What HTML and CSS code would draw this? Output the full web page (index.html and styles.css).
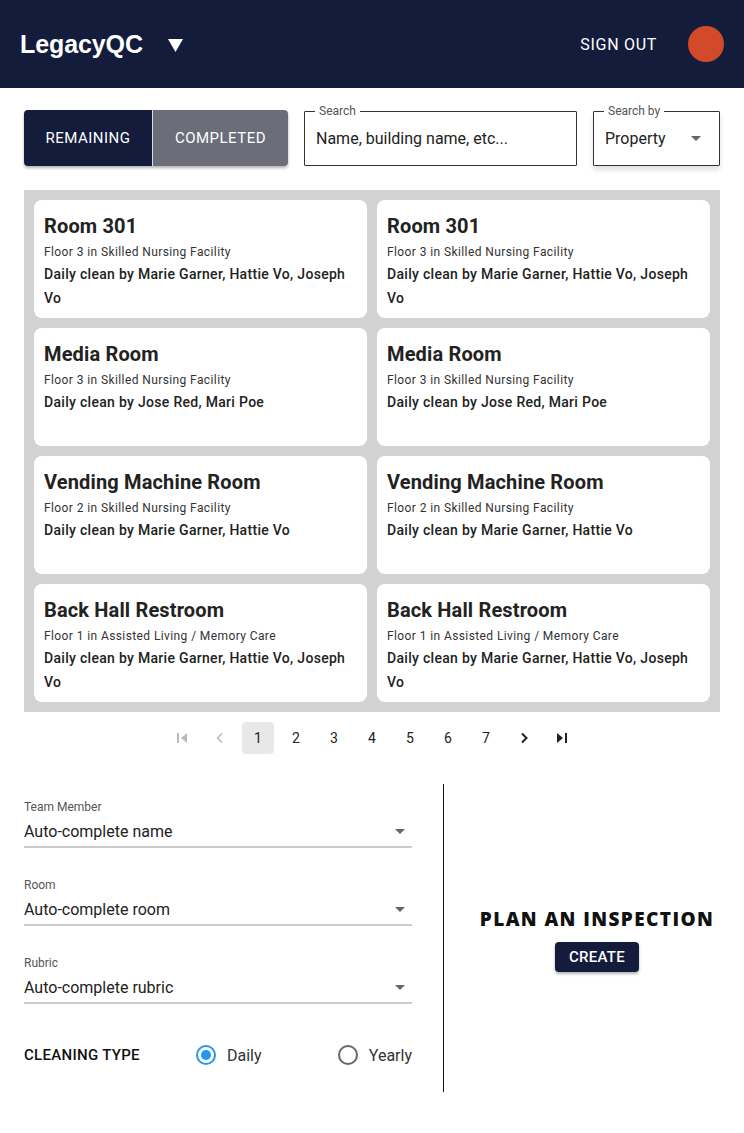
FILE: index.html
```html
<!DOCTYPE html>
<html>
<head>
<meta charset="utf-8">
<link rel="stylesheet" href="styles.css">
</head>
<body>
<header class="topbar">
  <div class="brand">
    <span class="brand-name">LegacyQC</span>
    <svg class="brand-caret" width="15" height="14" viewBox="0 0 15 14"><polygon points="0,1 15,1 7.5,14" fill="#fff"/></svg>
  </div>
  <div class="top-right">
    <span class="signout">SIGN OUT</span>
    <span class="avatar"></span>
  </div>
</header>

<main class="page">
  <div class="filters">
    <div class="toggle">
      <span class="toggle-btn active">REMAINING</span>
      <span class="toggle-btn">COMPLETED</span>
    </div>
    <fieldset class="outlined search">
      <legend>Search</legend>
      <span class="field-value">Name, building name, etc...</span>
    </fieldset>
    <fieldset class="outlined searchby">
      <legend>Search by</legend>
      <span class="field-value">Property</span>
      <svg class="caret" width="10" height="5" viewBox="0 0 10 5"><polygon points="0,0 10,0 5,5" fill="#666"/></svg>
    </fieldset>
  </div>

  <section class="grid">
    <div class="card"><h3>Room 301</h3><p class="sub">Floor 3 in Skilled Nursing Facility</p><p class="body">Daily clean by Marie Garner, Hattie Vo, Joseph Vo</p></div>
    <div class="card"><h3>Room 301</h3><p class="sub">Floor 3 in Skilled Nursing Facility</p><p class="body">Daily clean by Marie Garner, Hattie Vo, Joseph Vo</p></div>
    <div class="card"><h3>Media Room</h3><p class="sub">Floor 3 in Skilled Nursing Facility</p><p class="body">Daily clean by Jose Red, Mari Poe</p></div>
    <div class="card"><h3>Media Room</h3><p class="sub">Floor 3 in Skilled Nursing Facility</p><p class="body">Daily clean by Jose Red, Mari Poe</p></div>
    <div class="card"><h3>Vending Machine Room</h3><p class="sub">Floor 2 in Skilled Nursing Facility</p><p class="body">Daily clean by Marie Garner, Hattie Vo</p></div>
    <div class="card"><h3>Vending Machine Room</h3><p class="sub">Floor 2 in Skilled Nursing Facility</p><p class="body">Daily clean by Marie Garner, Hattie Vo</p></div>
    <div class="card"><h3>Back Hall Restroom</h3><p class="sub">Floor 1 in Assisted Living / Memory Care</p><p class="body">Daily clean by Marie Garner, Hattie Vo, Joseph Vo</p></div>
    <div class="card"><h3>Back Hall Restroom</h3><p class="sub">Floor 1 in Assisted Living / Memory Care</p><p class="body">Daily clean by Marie Garner, Hattie Vo, Joseph Vo</p></div>
  </section>

  <nav class="pager">
    <span class="pg icon disabled"><svg width="14" height="14" viewBox="0 0 14 14"><rect x="2" y="2" width="2" height="10" fill="currentColor"/><polygon points="12,2 12,12 6,7" fill="currentColor"/></svg></span>
    <span class="pg icon disabled"><svg width="14" height="14" viewBox="0 0 14 14"><polyline points="9,2.5 4.5,7 9,11.5" fill="none" stroke="currentColor" stroke-width="1.6"/></svg></span>
    <span class="pg current">1</span>
    <span class="pg">2</span>
    <span class="pg">3</span>
    <span class="pg">4</span>
    <span class="pg">5</span>
    <span class="pg">6</span>
    <span class="pg">7</span>
    <span class="pg icon"><svg width="14" height="14" viewBox="0 0 14 14"><polyline points="5,2.5 9.5,7 5,11.5" fill="none" stroke="currentColor" stroke-width="2"/></svg></span>
    <span class="pg icon"><svg width="14" height="14" viewBox="0 0 14 14"><polygon points="2,2 2,12 8,7" fill="currentColor"/><rect x="10" y="2" width="2" height="10" fill="currentColor"/></svg></span>
  </nav>

  <section class="plan">
    <div class="plan-form">
      <div class="select-field">
        <label>Team Member</label>
        <div class="select-row"><span>Auto-complete name</span><svg width="10" height="5" viewBox="0 0 10 5"><polygon points="0,0 10,0 5,5" fill="#666"/></svg></div>
      </div>
      <div class="select-field">
        <label>Room</label>
        <div class="select-row"><span>Auto-complete room</span><svg width="10" height="5" viewBox="0 0 10 5"><polygon points="0,0 10,0 5,5" fill="#666"/></svg></div>
      </div>
      <div class="select-field">
        <label>Rubric</label>
        <div class="select-row"><span>Auto-complete rubric</span><svg width="10" height="5" viewBox="0 0 10 5"><polygon points="0,0 10,0 5,5" fill="#666"/></svg></div>
      </div>
      <div class="cleaning">
        <span class="cleaning-label">CLEANING TYPE</span>
        <span class="radio"><span class="dot checked"></span>Daily</span>
        <span class="radio"><span class="dot"></span>Yearly</span>
      </div>
    </div>
    <div class="divider"></div>
    <div class="plan-cta">
      <h2>PLAN AN INSPECTION</h2>
      <span class="create">CREATE</span>
    </div>
  </section>
</main>
</body>
</html>
```

FILE: styles.css
```css
* { box-sizing: border-box; }
body {
  margin: 0;
  font-family: Roboto, "Noto Sans", sans-serif;
  color: #222;
  background: #fff;
}
.topbar {
  height: 88px;
  background: #141c3c;
  display: flex;
  align-items: center;
  justify-content: space-between;
  padding: 0 20px;
}
.brand { display: flex; align-items: center; gap: 25px; }
.brand-name {
  font-family: "Liberation Sans", Arial, sans-serif;
  font-weight: 700;
  font-size: 25px;
  color: #fff;
  letter-spacing: -0.1px;
}
.brand-caret { margin-top: 1px; }
.top-right { display: flex; align-items: center; gap: 31px; }
.signout {
  color: #fff;
  font-size: 16px;
  font-weight: 400;
  letter-spacing: 0.7px;
}
.avatar {
  width: 36px;
  height: 36px;
  border-radius: 50%;
  background: #d34a2a;
}
.page { padding: 22px 24px 0; }
.filters {
  display: flex;
  align-items: flex-start;
  gap: 16px;
}
.toggle {
  display: flex;
  width: 264px;
  height: 56px;
  border-radius: 4px;
  overflow: hidden;
  box-shadow: 0 2px 3px rgba(0,0,0,0.3);
}
.toggle-btn {
  display: flex;
  align-items: center;
  justify-content: center;
  font-size: 15px;
  font-weight: 400;
  color: #fff;
  background: #6b6d78;
  letter-spacing: 0.5px;
  flex: 135;
}
.toggle-btn.active { background: #141c3c; flex: 128; border-right: 1px solid #ddd; }
.outlined {
  margin: 0;
  padding: 0 11px;
  height: 62px;
  margin-top: -6px;
  border: 1.5px solid #333;
  border-radius: 1px;
  display: flex;
  align-items: center;
}
.outlined legend {
  font-size: 12px;
  color: #555;
  padding: 0 4px;
  margin-left: -1px;
  line-height: 14px;
}
.field-value { font-size: 16px; color: #222; margin-top: -6px; }
.search { width: 273px; }
.searchby {
  width: 127px;
  justify-content: space-between;
  padding-right: 18px;
  box-shadow: 0 4px 5px rgba(0,0,0,0.12);
}
.searchby .caret { margin-top: -6px; }
.grid {
  margin-top: 24px;
  background: #d3d3d3;
  padding: 10px;
  display: grid;
  grid-template-columns: 1fr 1fr;
  grid-auto-rows: 118px;
  gap: 10px;
}
.card {
  background: #fff;
  border-radius: 8px;
  padding: 13px 10px 0;
  font-family: Roboto, sans-serif;
}
.card h3 {
  margin: 0;
  font-size: 20px;
  font-weight: 700;
  line-height: 26px;
  color: #222;
  letter-spacing: 0.15px;
}
.card .sub {
  margin: 1px 0 0;
  font-size: 12px;
  line-height: 24px;
  color: #333;
  letter-spacing: 0.4px;
}
.card .body {
  margin: -2px 0 0;
  font-size: 14px;
  font-weight: 500;
  line-height: 24px;
  color: #222;
  letter-spacing: 0.3px;
}
.pager {
  display: flex;
  justify-content: center;
  gap: 6px;
  margin-top: 10px;
}
.pg {
  width: 32px;
  height: 32px;
  display: flex;
  align-items: center;
  justify-content: center;
  font-size: 14px;
  color: #222;
  border-radius: 4px;
}
.pg.icon { color: #222; }
.pg.disabled { color: #bbb; }
.pg.current { background: #e8e8e8; }
.plan {
  display: flex;
  margin-top: 30px;
}
.plan-form { width: 388px; padding-top: 15px; }
.select-field { height: 78px; }
.select-field label {
  display: block;
  font-size: 12px;
  color: #555;
  line-height: 16px;
}
.select-row {
  display: flex;
  align-items: center;
  justify-content: space-between;
  height: 33px;
  border-bottom: 2px solid #ccc;
  font-size: 16px;
  color: #222;
  padding-right: 7px;
  padding-top: 1px;
}
.cleaning {
  display: flex;
  align-items: center;
  margin-top: 7px;
  height: 30px;
}
.cleaning-label {
  font-size: 15px;
  font-weight: 500;
  color: #111;
  width: 172px;
  letter-spacing: 0.3px;
}
.radio {
  display: flex;
  align-items: center;
  gap: 11px;
  font-size: 16px;
  color: #333;
}
.radio + .radio { margin-left: auto; }
.dot {
  width: 20px;
  height: 20px;
  border-radius: 50%;
  border: 2px solid #666;
  position: relative;
}
.dot.checked { border-color: #2196f3; }
.dot.checked::after {
  content: "";
  position: absolute;
  left: 3px;
  top: 3px;
  width: 10px;
  height: 10px;
  border-radius: 50%;
  background: #2196f3;
}
.divider {
  width: 1px;
  background: #111;
  margin-left: 31px;
  height: 308px;
}
.plan-cta {
  flex: 1;
  display: flex;
  flex-direction: column;
  align-items: center;
  padding-top: 123px;
  margin-right: -24px;
  padding-left: 6px;
}
.plan-cta h2 {
  margin: 0;
  font-family: "Open Sans", sans-serif;
  font-weight: 800;
  font-size: 19px;
  letter-spacing: 1.4px;
  color: #111;
  line-height: 24px;
}
.create {
  margin-top: 11px;
  background: #141c3c;
  color: #fff;
  font-size: 15px;
  font-weight: 500;
  padding: 6px 14px;
  border-radius: 4px;
  box-shadow: 0 2px 3px rgba(0,0,0,0.3);
  letter-spacing: 0.3px;
}
```
